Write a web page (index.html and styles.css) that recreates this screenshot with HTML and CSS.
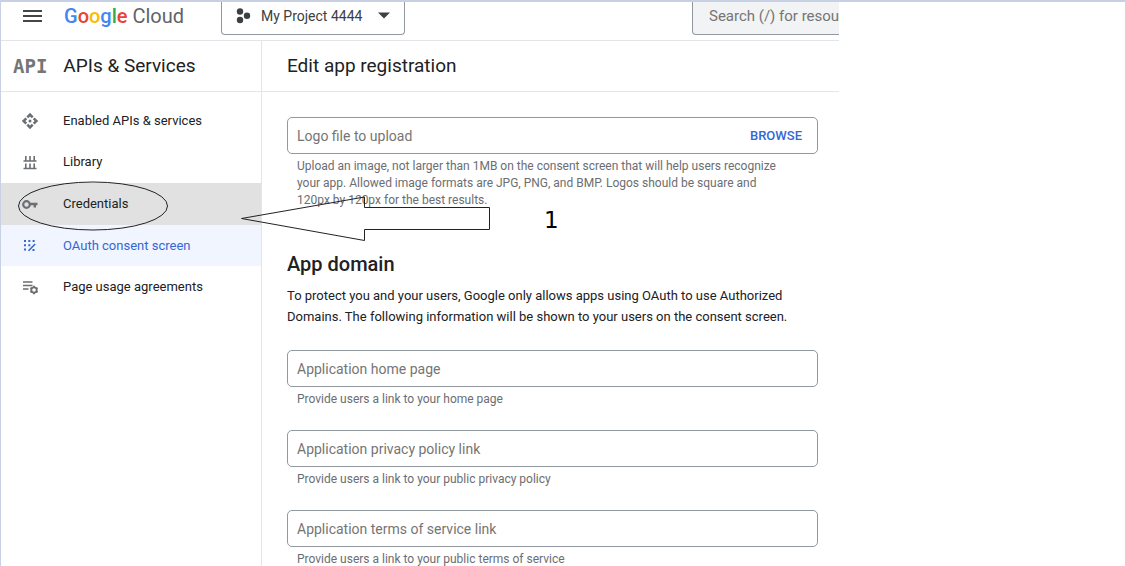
FILE: index.html
```html
<!DOCTYPE html>
<html lang="en">
<head>
<meta charset="utf-8">
<title>Edit app registration – APIs &amp; Services</title>
<link rel="stylesheet" href="styles.css">
</head>
<body>
<div class="frame">
  <div class="console">
    <header class="topbar">
      <button class="menu-button" type="button" aria-label="Main menu">
        <svg width="20" height="14" viewBox="0 0 20 14"><path d="M0 2h19M0 7h19M0 12h19" stroke="#444746" stroke-width="2"/></svg>
      </button>
      <a class="brand" href="#"><span class="brand-name"><span class="blue">G</span><span class="red">o</span><span class="yellow">o</span><span class="blue">g</span><span class="green">l</span><span class="red">e</span></span> <span class="brand-product">Cloud</span></a>
      <button class="project-picker" type="button">
        <svg width="15" height="16" viewBox="0 0 15 16" fill="#3c4043"><circle cx="4" cy="3.500" r="3.200"/><circle cx="4" cy="12" r="3.200"/><circle cx="11" cy="7.800" r="3.200"/></svg>
        <span>My Project 4444</span>
        <svg class="caret" width="12" height="7" viewBox="0 0 12 7"><path d="M0 .5h12L6 6.500z" fill="#3c4043"/></svg>
      </button>
      <input class="search" type="search" aria-label="Search" placeholder="Search (/) for resources, docs, products, and more">
    </header>
    <div class="workspace">
      <aside class="sidebar">
        <div class="section-title"><span class="api-mark">API</span><h2>APIs &amp; Services</h2></div>
        <nav class="nav" aria-label="APIs and Services">
          <a class="nav-item" href="#">
            <svg width="18" height="18" viewBox="0 0 18 18" fill="#6b6e72"><circle cx="9" cy="9" r="1.500"/><path d="M9 .8l3.600 3.600-1.800 1.800L9 4.400 7.200 6.200 5.400 4.400zM9 17.200l3.600-3.600-1.800-1.800L9 13.600l-1.800-1.800-1.800 1.800zM.8 9l3.600-3.600 1.800 1.800L4.400 9l1.800 1.800-1.800 1.800zM17.200 9l-3.600-3.600-1.800 1.800L13.600 9l-1.800 1.800 1.800 1.800z"/></svg>
            <span>Enabled APIs &amp; services</span></a>
          <a class="nav-item" href="#">
            <svg width="18" height="18" viewBox="0 0 18 18" fill="none" stroke="#6b6e72" stroke-width="1.600"><path d="M2.500 8h13M4.800 3v5M9 3v5M13.200 3v5M2.500 15.500h13M4.800 10.500v5M9 10.500v5M13.200 10.500v5"/></svg>
            <span>Library</span></a>
          <a class="nav-item hovered" href="#">
            <svg width="18" height="18" viewBox="0 0 18 18" fill="none" stroke="#6b6e72"><circle cx="5.500" cy="9.500" r="3.300" stroke-width="2.200"/><path d="M8.500 9h8M13.800 9v3.500" stroke-width="2.400"/></svg>
            <span>Credentials</span></a>
          <a class="nav-item active" href="#" aria-current="page">
            <svg width="18" height="18" viewBox="0 0 18 18" fill="#3367d6"><path d="M3 3h2v2H3zM7.300 3h2v2h-2zM11.600 3h2v2h-2zM3 7.300h2v2H3zM7.300 7.300h2v2h-2zM3 11.600h2v2H3z"/><path d="M7.500 13.800l6.700-6.800" stroke="#3367d6" stroke-width="1.600"/><path d="M11.500 13h2" stroke="#3367d6" stroke-width="2"/></svg>
            <span>OAuth consent screen</span></a>
          <a class="nav-item" href="#">
            <svg width="18" height="18" viewBox="0 0 18 18" fill="none" stroke="#6b6e72"><path d="M2 4h9.500M2 7.500h9.500M2 11h5.500" stroke-width="1.600"/><circle cx="13" cy="12" r="2.700" stroke-width="1.800"/><path d="M13 7.800v1.500M13 14.700v1.500M9.400 9.900l1.300.7M15.300 13.400l1.300.7M9.400 14.100l1.300-.7M15.300 10.600l1.300-.7" stroke-width="1.800"/></svg>
            <span>Page usage agreements</span></a>
        </nav>
      </aside>
      <main class="main">
        <div class="page-title"><h1>Edit app registration</h1></div>
        <form class="form">
          <div class="field">
            <div class="control">
              <input id="logo" type="text" aria-label="Logo file to upload" aria-describedby="logo-help" placeholder="Logo file to upload">
              <button class="browse" type="button">BROWSE</button>
            </div>
            <p class="help" id="logo-help">Upload an image, not larger than 1MB on the consent screen that will help users recognize your app. Allowed image formats are JPG, PNG, and BMP. Logos should be square and 120px by 120px for the best results.</p>
          </div>
          <section class="domain">
            <h2>App domain</h2>
            <p class="intro">To protect you and your users, Google only allows apps using OAuth to use Authorized Domains. The following information will be shown to your users on the consent screen.</p>
            <div class="fields">
              <div class="field">
                <div class="control"><input type="url" aria-label="Application home page" aria-describedby="home-help" placeholder="Application home page"></div>
                <p class="help" id="home-help">Provide users a link to your home page</p>
              </div>
              <div class="field">
                <div class="control"><input type="url" aria-label="Application privacy policy link" aria-describedby="privacy-help" placeholder="Application privacy policy link"></div>
                <p class="help" id="privacy-help">Provide users a link to your public privacy policy</p>
              </div>
              <div class="field">
                <div class="control"><input type="url" aria-label="Application terms of service link" aria-describedby="terms-help" placeholder="Application terms of service link"></div>
                <p class="help" id="terms-help">Provide users a link to your public terms of service</p>
              </div>
            </div>
          </section>
        </form>
      </main>
    </div>
  </div>
  <svg class="callout-ring" width="152" height="50" viewBox="0 0 152 50" fill="none" stroke="#222"><ellipse cx="76" cy="25" rx="74.500" ry="24"/></svg>
  <svg class="callout-arrow" width="252" height="46" viewBox="0 0 252 46" stroke="#222"><path fill="none" d="M1.500 22.500L124.500 1v10.500h125v22h-125v11z"/><path fill="#fff" stroke="none" d="M125 12h124v21H125z"/></svg>
  <span class="callout-number">1</span>
</div>
</body>
</html>
```

FILE: styles.css
```css
* { box-sizing: border-box; }

body {
  margin: 0;
  background: #fff;
  color: #202124;
  font: 13px/20px Roboto, "Liberation Sans", sans-serif;
}

h1, h2, p { margin: 0; }
h1, h2 { font-weight: 400; }
a { color: inherit; text-decoration: none; }
svg { display: block; flex: none; }
button, input { font: inherit; color: inherit; }
button { background: none; border: 0; padding: 0; cursor: pointer; }
input::placeholder { color: #757575; opacity: 1; }

.frame {
  position: relative;
  height: 100vh;
  overflow: hidden;
  border-top: 2px solid #c8d0e3;
  border-left: 1px solid #c8d0e3;
}

.console {
  display: flex;
  flex-direction: column;
  max-width: 838px;
  height: 100%;
  overflow: hidden;
}

.topbar {
  display: flex;
  align-items: flex-start;
  height: 39px;
  flex: none;
  border-bottom: 1px solid #e3e5e8;
}

.menu-button { margin: 7px 21px 0 22px; }

.brand {
  width: 157px;
  flex: none;
  font-size: 20px;
  line-height: 28px;
  white-space: nowrap;
}
.brand-name { font-weight: 500; }
.brand-product { color: #5f6368; }
.blue { color: #4285f4; }
.red { color: #ea4335; }
.yellow { color: #fbbc04; }
.green { color: #34a853; }

.project-picker {
  display: flex;
  align-items: center;
  gap: 10px;
  width: 184px;
  height: 33px;
  flex: none;
  padding: 0 14px 5px;
  border: 1px solid #9298a0;
  border-top: 0;
  border-radius: 0 0 4px 4px;
  color: #3c4043;
  font-size: 14px;
}
.caret { margin-left: auto; }

.search {
  width: 600px;
  height: 33px;
  flex: none;
  margin-left: 287px;
  padding: 0 16px 4px;
  border: 1px solid #9298a0;
  border-top: 0;
  border-radius: 0 0 4px 4px;
  background: #f1f3f4;
  font-size: 15px;
}

.workspace { display: flex; flex: 1; }

.sidebar {
  width: 261px;
  flex: none;
  border-right: 1px solid #e3e5e8;
}

.section-title, .page-title {
  display: flex;
  align-items: center;
  height: 51px;
  border-bottom: 1px solid #e3e5e8;
}
.section-title { gap: 16px; padding-left: 12px; }
.section-title h2, .page-title h1 { font-size: 19px; line-height: 24px; }
.api-mark {
  color: #757575;
  font: bold 19px/24px "DejaVu Sans Mono", monospace;
}

.nav {
  display: grid;
  grid-auto-rows: 1fr;
  min-height: 208px;
  margin-top: 8px;
}
.nav-item {
  display: flex;
  align-items: center;
  gap: 24px;
  padding-left: 20px;
}
.nav-item.hovered { background: #e1e1e1; }
.nav-item.active { background: #f0f5ff; color: #3367d6; }

.main { flex: 1; min-width: 0; }
.page-title { padding-left: 25px; }
.form { padding: 25px 21px 0 25px; }

.control {
  display: flex;
  align-items: center;
  height: 37px;
  padding: 0 15px 0 9px;
  border: 1px solid #9298a0;
  border-radius: 5px;
}
.control input {
  flex: 1;
  min-width: 0;
  padding: 0;
  border: 0;
  background: none;
  font-size: 14px;
}
.browse { color: #3367d6; font-weight: 500; }

.help {
  margin-top: 4px;
  padding: 0 30px 0 10px;
  color: #6b6e72;
  font-size: 12px;
  line-height: 17px;
}

.domain { margin-top: 41px; }
.domain h2 { font-size: 20px; font-weight: 500; line-height: 28px; }
.intro { margin-top: 7px; line-height: 21px; }
.fields { display: grid; gap: 22px; margin-top: 23px; }

.callout-ring { position: absolute; left: 16px; top: 179px; }
.callout-arrow { position: absolute; left: 239px; top: 194px; }
.callout-number {
  position: absolute;
  left: 543px;
  top: 204px;
  color: #000;
  font: 23px/28px "DejaVu Sans", sans-serif;
}
```
